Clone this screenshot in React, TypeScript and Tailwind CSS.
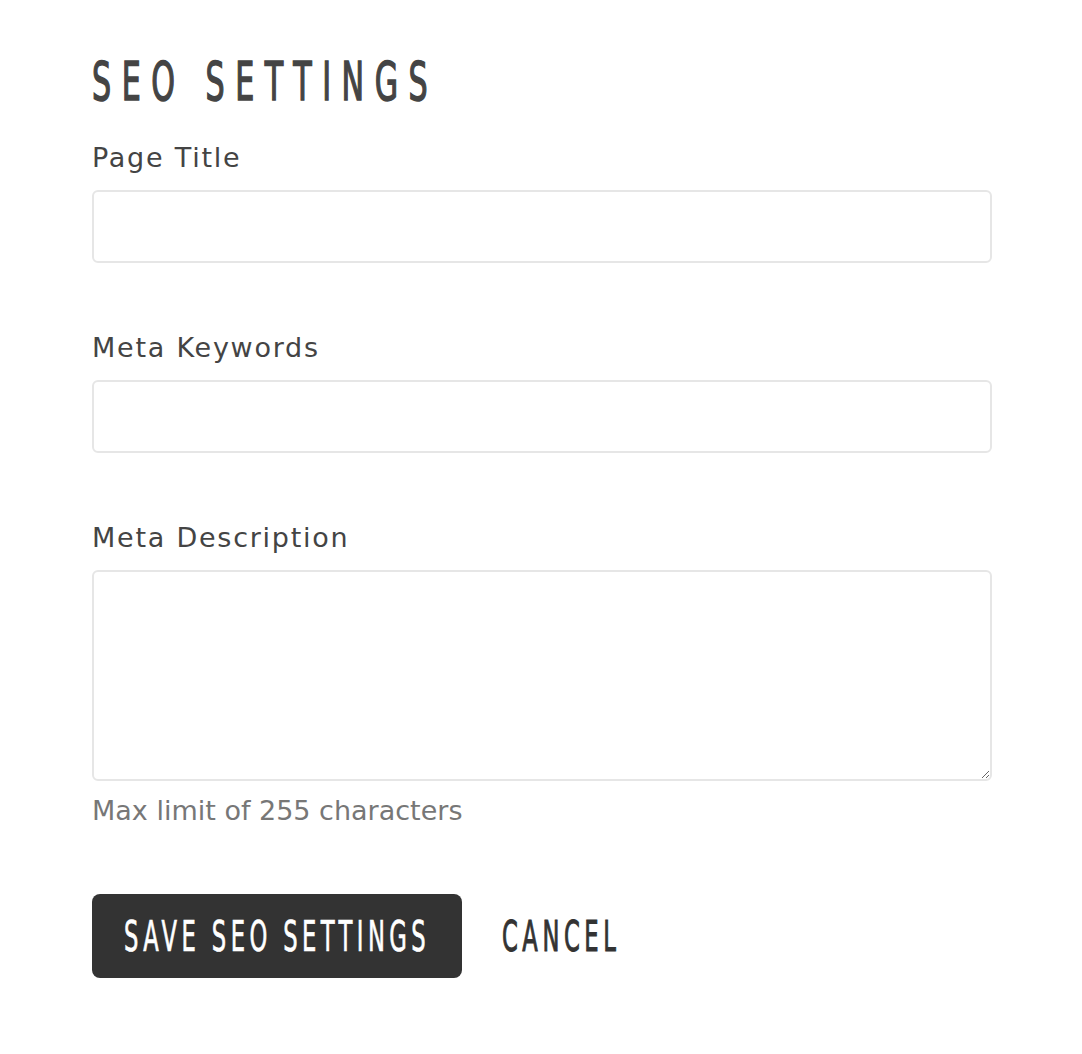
export default function App() {
  const body = { fontFamily: '"DejaVu Sans", "Noto Sans", sans-serif' };
  const head = { fontFamily: '"DejaVu Sans Condensed", "Liberation Sans", sans-serif' };

  return (
    <div className="min-h-screen bg-white px-[92px] pt-[50px]" style={body}>
      <h1 className="h-[64px] whitespace-nowrap text-[#444]" style={head}>
        <span className="inline-block origin-left scale-x-[0.62] text-[54px] font-normal leading-[64px] tracking-[0.315em] uppercase [-webkit-text-stroke:1.5px_#444]">
          SEO Settings
        </span>
      </h1>

      <form className="mt-[26px] flex flex-col" onSubmit={(e) => e.preventDefault()}>
        <label className="text-[27px] leading-[36px] tracking-[0.065em] text-[#444]">Page Title</label>
        <input className="mt-[14px] h-[73px] w-[900px] rounded-[6px] border-2 border-[#e6e6e6] outline-none px-4" />

        <label className="mt-[67px] text-[27px] leading-[36px] tracking-[0.065em] text-[#444]">Meta Keywords</label>
        <input className="mt-[14px] h-[73px] w-[900px] rounded-[6px] border-2 border-[#e6e6e6] outline-none px-4" />

        <label className="mt-[67px] text-[27px] leading-[36px] tracking-[0.065em] text-[#444]">Meta Description</label>
        <textarea className="mt-[14px] h-[211px] w-[900px] rounded-[6px] border-2 border-[#e6e6e6] outline-none p-4" />
        <p className="mt-[12px] text-[27px] leading-[36px] text-[#777]">Max limit of 255 characters</p>

        <div className="mt-[65px] flex items-center">
          <button className="flex h-[84px] w-[370px] items-center justify-center rounded-[8px] bg-[#333] whitespace-nowrap text-white" style={head}>
            <span className="inline-block shrink-0 scale-x-[0.6] text-[42px] font-normal tracking-[0.175em] uppercase [-webkit-text-stroke:0.7px_#fff]">Save SEO Settings</span>
          </button>
          <button type="button" className="ml-[40px] whitespace-nowrap text-[#333]" style={head}>
            <span className="inline-block origin-left scale-x-[0.6] text-[42px] font-normal tracking-[0.18em] uppercase [-webkit-text-stroke:1px_#333]">Cancel</span>
          </button>
        </div>
      </form>
    </div>
  );
}
